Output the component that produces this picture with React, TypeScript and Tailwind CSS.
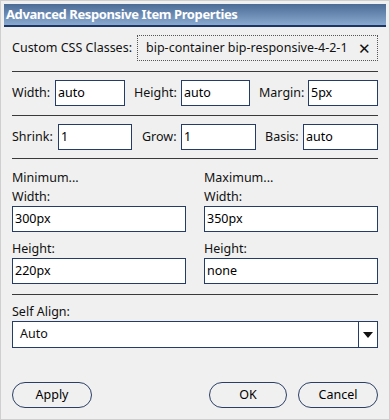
const font = { fontFamily: '"Noto Sans", "Open Sans", sans-serif' }

function Field({ value, className }: { value: string; className?: string }) {
  return (
    <div
      className={`h-[26px] border-[1.5px] border-[#253c66] bg-white px-[2px] flex items-center text-black ${className ?? ''}`}
    >
      {value}
    </div>
  )
}

function Label({ text, className }: { text: string; className?: string }) {
  return <span className={`shrink-0 whitespace-nowrap ${className ?? ''}`}>{text}</span>
}

function Divider() {
  return <div className="h-px bg-[#3a3a3a]" />
}

function PillButton({ label, className }: { label: string; className?: string }) {
  return (
    <button
      className={`h-[26px] rounded-[13px] border-[1.5px] border-[#2b3f66] bg-[#f0f0f0] text-black ${className ?? ''}`}
    >
      {label}
    </button>
  )
}

export default function App() {
  return (
    <div className="w-[390px] h-[420px] bg-[#f0f0f0] border border-[#cfcfcf] p-[3px] flex flex-col" style={font}>
      <div className="h-[23px] bg-gradient-to-b from-[#4c6c96] to-[#8aa9d0] border-b-2 border-[#1b3565] flex items-center pl-[2px]">
        <span className="text-white font-bold text-[13px] leading-none tracking-[-0.4px]">
          Advanced Responsive Item Properties
        </span>
      </div>

      <div className="flex-1 px-[8px] pt-[8px] flex flex-col text-[12.5px] text-[#111]">
        <div className="flex items-center">
          <Label text="Custom CSS Classes:" className="w-[125px]" />
          <div className="flex-1 h-[26px] border border-dotted border-[#555] flex items-center pl-[8px] pr-[6px]">
            <span className="flex-1 whitespace-nowrap">bip-container bip-responsive-4-2-1</span>
            <span className="text-[15px] leading-none">✕</span>
          </div>
        </div>

        <div className="mt-[10px]">
          <Divider />
        </div>

        <div className="mt-[8px] flex items-center">
          <Label text="Width:" className="w-[43px]" />
          <Field value="auto" className="w-[70px]" />
          <Label text="Height:" className="ml-[9px] w-[47px]" />
          <Field value="auto" className="w-[69px]" />
          <Label text="Margin:" className="ml-[9px] w-[49px]" />
          <Field value="5px" className="flex-1" />
        </div>

        <div className="mt-[9px]">
          <Divider />
        </div>

        <div className="mt-[8px] flex items-center">
          <Label text="Shrink:" className="w-[46px]" />
          <Field value="1" className="w-[74px]" />
          <Label text="Grow:" className="ml-[10px] w-[39px]" />
          <Field value="1" className="w-[75px]" />
          <Label text="Basis:" className="ml-[9px] w-[38px]" />
          <Field value="auto" className="flex-1" />
        </div>

        <div className="mt-[8px]">
          <Divider />
        </div>

        <div className="mt-[9px] grid grid-cols-2 gap-x-[18px]">
          <div className="flex flex-col">
            <span className="leading-[19px]">Minimum...</span>
            <span className="leading-[19px]">Width:</span>
            <Field value="300px" />
            <span className="mt-[7px] leading-[19px]">Height:</span>
            <Field value="220px" />
          </div>
          <div className="flex flex-col">
            <span className="leading-[19px]">Maximum...</span>
            <span className="leading-[19px]">Width:</span>
            <Field value="350px" />
            <span className="mt-[7px] leading-[19px]">Height:</span>
            <Field value="none" />
          </div>
        </div>

        <div className="mt-[10px]">
          <Divider />
        </div>

        <span className="mt-[7px] leading-[19px]">Self Align:</span>
        <div className="h-[27px] border-[1.5px] border-[#253c66] bg-white flex items-center pl-[7px]">
          <span className="flex-1">Auto</span>
          <div className="w-[19px] h-full border-l-[1.5px] border-[#253c66] flex items-center justify-center">
            <svg width="10" height="6" viewBox="0 0 10 6">
              <path d="M0 0 L10 0 L5 6 Z" fill="#111" />
            </svg>
          </div>
        </div>

        <div className="mt-auto mb-[8px] flex items-center">
          <PillButton label="Apply" className="w-[80px]" />
          <PillButton label="OK" className="ml-auto w-[78px]" />
          <PillButton label="Cancel" className="ml-[11px] w-[80px]" />
        </div>
      </div>
    </div>
  )
}
